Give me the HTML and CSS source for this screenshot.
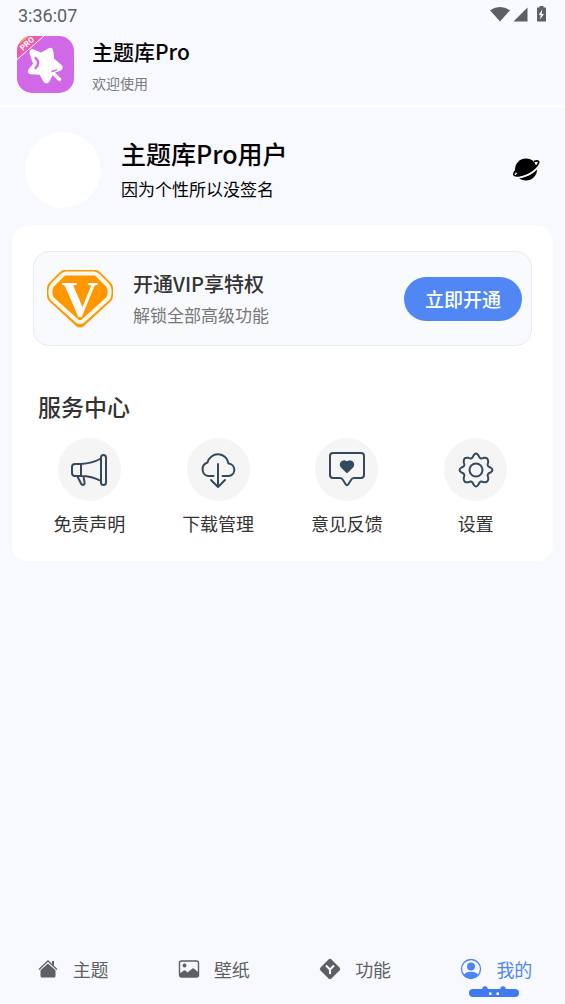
FILE: index.html
```html
<!DOCTYPE html>
<html lang="zh-CN">
<head>
<meta charset="utf-8">
<meta name="viewport" content="width=device-width, initial-scale=1">
<title>主题库Pro</title>
<link rel="stylesheet" href="styles.css">
</head>
<body>
<div class="status-bar">
  <time class="clock">3:36:07</time>
  <svg class="status-icons" width="57" height="18" viewBox="0 0 57 18" fill="#5d5f63" aria-hidden="true">
    <path d="M0 3.200Q10-3.400 20 3.200L10 14.500Z"/>
    <path d="M37.500 .5V14.500H23.500Z"/>
    <path d="M49.500-1h4v1.500h2.500v14h-9V.5h2.500z"/>
    <path d="M52.200 2.500 48.700 8h2l-.7 4.500L54 7h-2.300z" fill="#f8f9fe"/>
  </svg>
</div>
<header class="app-header">
  <svg class="app-logo" width="57" height="57" viewBox="0 0 57 57" aria-hidden="true">
    <defs><clipPath id="logo-shape"><rect width="57" height="57" rx="15"/></clipPath></defs>
    <g clip-path="url(#logo-shape)">
      <rect width="57" height="57" fill="#d068e8"/>
      <path d="M0 0H27L0 24Z" fill="#f259a8"/>
      <path d="M0 0H12L0 10Z" fill="#f2b04e"/>
      <path d="M27 0 0 23.500" stroke="#fff" stroke-width="1"/>
    </g>
    <text class="logo-ribbon" transform="translate(6 15) rotate(-42)">PRO</text>
    <path d="M16 14 24 17.500 32 13Q35 11.500 35.500 15L36.500 23 44 29.500Q46.500 32 43 34L36 36.500 32 45Q29.500 48.500 27 45L23 38 14 37.500Q10.500 37 12 34L17 28 13.500 18Q12.500 13.500 16 14Z" fill="#fff" stroke="#fff" stroke-width="1.500" stroke-linejoin="round"/>
    <path d="M36 37 42.500 43.500" stroke="#fff" stroke-width="3.500" stroke-linecap="round"/>
    <path d="M18.500 22Q22.500 25 20.500 29.500L18.500 32" fill="none" stroke="#d068e8" stroke-width="2.500" stroke-linecap="round"/>
    <path d="M34.500 35.500 40 34" stroke="#d068e8" stroke-width="1.500"/>
  </svg>
  <div class="app-text">
    <h1 class="app-name">主题库Pro</h1>
    <p class="app-greeting">欢迎使用</p>
  </div>
</header>
<main class="content">
  <section class="profile">
    <div class="avatar"></div>
    <div class="profile-text">
      <h2 class="profile-name">主题库Pro用户</h2>
      <p class="profile-bio">因为个性所以没签名</p>
    </div>
    <button class="planet-button" type="button" aria-label="切换主题">
      <svg width="28" height="26" viewBox="0 0 28 26" aria-hidden="true">
        <circle cx="14" cy="12.500" r="11"/>
        <path d="M27 8.500Q23 14.500 16 17.800Q9 21 3 20.500" fill="none" stroke="#f8f9fe" stroke-width="2"/>
        <path d="M22 4.500Q27.500 2.700 26.500 6Q24.500 11 16 15.300Q7 20 2.500 18.500Q.5 17.500 4 13" fill="none" stroke="#000" stroke-width="1.700"/>
        <path d="M23 6.200Q25.500 5 24.500 6.800L23.700 8Z" fill="#f8f9fe"/>
        <path d="M4 15.500Q3 17.500 5.500 17Z" fill="#f8f9fe"/>
      </svg>
    </button>
  </section>
  <div class="panel">
    <section class="vip">
      <svg class="vip-badge" width="68" height="60" viewBox="0 0 68 60" aria-hidden="true">
        <path d="M18 1H50Q52 1 54 3L65 14Q67 16 67 19V27Q67 30 65 32L38 57Q34 60 30 57L3 32Q1 30 1 27V19Q1 16 3 14L14 3Q16 1 18 1Z" fill="#ff9800"/>
        <path d="M20 4.500H48Q50 4.500 52 6.500L61.500 16Q63.500 18 63.500 21V25Q63.500 28 61.500 30L37 52Q34 54.500 31 52L6.500 30Q4.500 28 4.500 25V21Q4.500 18 6.500 16L16 6.500Q18 4.500 20 4.500Z" fill="#ff9800" stroke="#fff8ec" stroke-width="4"/>
        <text class="vip-letter" x="34" y="47" text-anchor="middle">V</text>
      </svg>
      <div class="vip-text">
        <h2 class="vip-title">开通VIP享特权</h2>
        <p class="vip-note">解锁全部高级功能</p>
      </div>
      <button class="vip-button" type="button">立即开通</button>
    </section>
    <section class="services">
      <h2 class="services-title">服务中心</h2>
      <div class="service-grid">
        <button class="service" type="button">
          <span class="service-icon"><svg width="40" height="40" viewBox="0 0 40 40" aria-hidden="true">
            <rect x="32" y="5" width="5" height="30" rx="2.500"/>
            <path d="M32 8.500Q23 13.500 12 14H6Q3 14 3 17V23Q3 26 6 26H12Q23 26 32 31M12 14V26M8.500 26.500 12 33.500Q13 35.500 15 34.500Q16 34 15.500 32L14.500 26.500"/>
          </svg></span>
          <span class="service-label">免责声明</span>
        </button>
        <button class="service" type="button">
          <span class="service-icon"><svg width="40" height="40" viewBox="0 0 40 40" aria-hidden="true">
            <path d="M15.500 26H10A7 7 0 0 1 9.500 12.500A10.700 10.700 0 0 1 30.500 13.500A6.300 6.300 0 0 1 31 26H24.500M20 14V37M13 30 20 37 27 30"/>
          </svg></span>
          <span class="service-label">下载管理</span>
        </button>
        <button class="service" type="button">
          <span class="service-icon"><svg width="40" height="40" viewBox="0 0 40 40" aria-hidden="true">
            <path d="M6 3H34Q37 3 37 6V25Q37 28 34 28H27Q25 28 24 30L21.500 34Q20 36.500 18.500 34L16 30Q15 28 13 28H6Q3 28 3 25V6Q3 3 6 3Z"/>
            <path class="heart" d="M20 22 14.800 17Q13 15 14.500 12.500Q17 10 20 12.500Q23 10 25.500 12.500Q27 15 25.200 17Z"/>
          </svg></span>
          <span class="service-label">意见反馈</span>
        </button>
        <button class="service" type="button">
          <span class="service-icon"><svg width="40" height="40" viewBox="0 0 40 40" aria-hidden="true">
            <circle cx="20" cy="20" r="6.500"/>
            <path d="M17.500 5.500Q20 1.500 22.500 5.500C23.500 8.500 25 9 27.500 7.800Q32.500 7 32.200 12.500C31 15 31.500 16.500 34.500 17.500Q38.500 20 34.500 22.500C31.500 23.500 31 25 32.200 27.500Q33 32.500 27.500 32.200C25 31 23.500 31.500 22.500 34.500Q20 38.500 17.500 34.500C16.500 31.500 15 31 12.500 32.200Q7 33 7.800 27.500C9 25 8.500 23.500 5.500 22.500Q1.500 20 5.500 17.500C8.500 16.500 9 15 7.800 12.500Q7 7 12.500 7.800C15 9 16.500 8.500 17.500 5.500Z"/>
          </svg></span>
          <span class="service-label">设置</span>
        </button>
      </div>
    </section>
  </div>
</main>
<nav class="tab-bar">
  <a class="tab" href="#themes">
    <svg width="22" height="22" viewBox="0 0 22 22" fill="currentColor" aria-hidden="true">
      <path d="M11 5.500 18.500 12V18Q18.500 19.500 17 19.500H5Q3.500 19.500 3.500 18V12ZM15 3h2v5L15 6Z"/>
      <path d="M2 11.500 11 3 20 11.500" fill="none" stroke="currentColor" stroke-width="1.300"/>
      <path d="M3 12.200 11 4.700 19 12.200" fill="none" stroke="#f8f9fe" stroke-width=".6"/>
    </svg>
    <span>主题</span>
  </a>
  <a class="tab" href="#wallpapers">
    <svg width="22" height="22" viewBox="0 0 22 22" fill="currentColor" aria-hidden="true">
      <rect x="1.500" y="3" width="19" height="16" rx="2" fill="none" stroke="currentColor" stroke-width="1.400"/>
      <circle cx="6.500" cy="7.500" r="1.900"/>
      <path d="M1.500 15.500 6 12.500Q7 12 8 13L9.500 14.500 14.500 10.500Q15.500 10 16.500 11L20.500 14.500V18L19 19H3L1.500 18Z"/>
    </svg>
    <span>壁纸</span>
  </a>
  <a class="tab" href="#tools">
    <svg width="22" height="22" viewBox="0 0 22 22" fill="currentColor" aria-hidden="true">
      <path d="M9.500 1.500Q11 0 12.500 1.500L20.500 9.500Q22 11 20.500 12.500L12.500 20.500Q11 22 9.500 20.500L1.500 12.500Q0 11 1.500 9.500Z"/>
      <path d="M7 7.500 11 11.500 15 7.500M11 11.500V16" fill="none" stroke="#f8f9fe" stroke-width="2"/>
    </svg>
    <span>功能</span>
  </a>
  <a class="tab tab-active" href="#mine" aria-current="page">
    <svg width="22" height="22" viewBox="0 0 22 22" fill="currentColor" aria-hidden="true">
      <defs><clipPath id="person"><circle cx="11" cy="11" r="9.500"/></clipPath></defs>
      <circle cx="11" cy="11" r="9.500" fill="none" stroke="currentColor" stroke-width="1.300"/>
      <circle cx="11" cy="8.500" r="4"/>
      <ellipse cx="11" cy="18" rx="7.500" ry="4.300" clip-path="url(#person)"/>
    </svg>
    <span>我的</span>
    <svg class="tab-mark" width="50" height="11" viewBox="0 0 50 11" aria-hidden="true">
      <g fill="#407af0"><rect y="3" width="50" height="8" rx="4"/><circle cx="16" cy="3" r="2.700"/><circle cx="34" cy="3" r="2.700"/></g>
      <path d="M20 6.500h2.500v2.500H20zM27.500 6.500H30v2.500h-2.500z" fill="#fff"/>
    </svg>
  </a>
</nav>
</body>
</html>
```
FILE: styles.css
```css
* {
  box-sizing: border-box;
}

body {
  margin: 0;
  min-height: 100vh;
  display: flex;
  flex-direction: column;
  background: #f8f9fe;
  color: #000;
  font-family: "Noto Sans CJK SC", "Noto Sans", sans-serif;
  font-size: 18px;
  line-height: 24px;
}

h1, h2, p {
  margin: 0;
  font-weight: 500;
}

p {
  font-weight: 400;
}

button {
  padding: 0;
  border: 0;
  background: none;
  color: inherit;
  font: inherit;
  cursor: pointer;
}

svg {
  display: block;
  flex: none;
}

.status-bar {
  height: 32px;
  padding: 0 18px;
  display: flex;
  align-items: center;
  justify-content: space-between;
}

.status-icons {
  overflow: visible;
}

.clock {
  color: #5d5f63;
  font: 400 18px/24px Roboto, sans-serif;
}

.app-header {
  height: 76px;
  padding: 4px 17px 0;
  display: flex;
  align-items: flex-start;
  gap: 18px;
  border-bottom: 3px solid #fff;
}

.logo-ribbon {
  fill: #fff;
  font: 700 8px Roboto, sans-serif;
}

.app-name {
  font-size: 21px;
  line-height: 30px;
  font-weight: 500;
}

.app-greeting {
  color: #77797d;
  font-size: 14px;
  line-height: 34px;
}

.profile {
  padding: 24px 25px 18px;
  display: flex;
  align-items: center;
  gap: 20px;
}

.avatar {
  width: 76px;
  height: 76px;
  flex: none;
  border-radius: 50%;
  background: #fff;
}

.profile-text {
  flex: 1;
  padding-bottom: 2px;
}

.profile-name {
  font-size: 25px;
  line-height: 40px;
  font-weight: 500;
}

.profile-bio {
  font-size: 17px;
  line-height: 32px;
}

.panel {
  margin: 0 12px;
  padding: 25px 13px 26px;
  border-radius: 16px;
  background: #fff;
}

.vip {
  margin: 0 8px;
  padding: 16px 9px 16px 12px;
  display: flex;
  align-items: center;
  border: 1px solid #e9ebef;
  border-radius: 16px;
  background: #f9fafe;
}

.vip-letter {
  fill: #fff;
  font: 700 51px "Liberation Serif", serif;
}

.vip-text {
  flex: 1;
  margin-left: 19px;
}

.vip-title {
  color: #333;
  font-size: 20px;
  line-height: 32px;
}

.vip-note {
  color: #777;
  font-size: 17px;
  line-height: 29px;
}

.vip-button {
  width: 118px;
  height: 44px;
  border-radius: 22px;
  background: #5187f5;
  color: #fff;
  font-size: 19px;
  font-weight: 500;
}

.services {
  margin-top: 44px;
}

.services-title {
  margin-left: 13px;
  color: #333;
  font-size: 23px;
  line-height: 32px;
}

.service-grid {
  margin-top: 16px;
  display: grid;
  grid-template-columns: repeat(4, 1fr);
}

.service {
  display: flex;
  flex-direction: column;
  align-items: center;
  gap: 10px;
}

.service-icon {
  width: 63px;
  height: 63px;
  display: grid;
  place-items: center;
  border-radius: 50%;
  background: #f5f5f6;
}

.service-icon svg {
  fill: none;
  stroke: #34495e;
  stroke-width: 2;
  stroke-linecap: round;
  stroke-linejoin: round;
}

.service-icon .heart {
  fill: #34495e;
}

.service-label {
  color: #333;
}

.tab-bar {
  height: 70px;
  margin-top: auto;
  display: grid;
  grid-template-columns: repeat(4, 1fr);
}

.tab {
  position: relative;
  padding-left: 4px;
  display: flex;
  align-items: center;
  justify-content: center;
  gap: 14px;
  color: #5d5f63;
  text-decoration: none;
}

.tab-active {
  color: #4e85f5;
}

.tab-mark {
  position: absolute;
  bottom: 7px;
  left: 50%;
  transform: translateX(-50%);
}
```
